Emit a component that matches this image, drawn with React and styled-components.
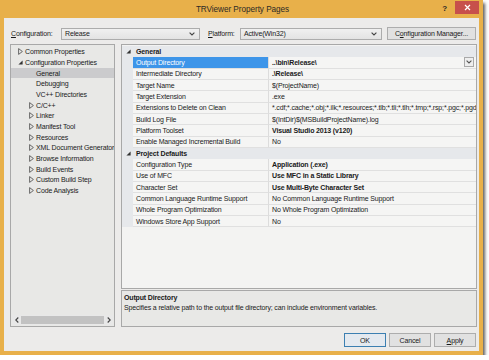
import React from 'react';
import styled, { createGlobalStyle } from 'styled-components';

const FONT = `"Liberation Sans", Arial, sans-serif`;

const Global = createGlobalStyle`
  html, body { margin: 0; padding: 0; background: #ffffff; }
  body { font-family: ${FONT}; }
  * { box-sizing: border-box; }
`;

const Window = styled.div`
  width: 483px;
  height: 355px;
  background: #e8b04a;
  padding: 0 4px 4px 4px;
  display: flex;
  flex-direction: column;
  box-shadow: 2px 3px 3px rgba(40, 40, 40, 0.75);
  font-family: ${FONT};
  font-size: 7px;
  letter-spacing: -0.15px;
  color: #1a1a1a;
`;

const TitleBar = styled.div`
  height: 18px;
  display: grid;
  grid-template-columns: 1fr auto 1fr;
  align-items: center;
`;

const TitleText = styled.div`
  font-size: 8.2px;
  letter-spacing: -0.05px;
  color: #2c2a26;
  padding-left: 2px;
`;

const TitleButtons = styled.div`
  display: flex;
  justify-content: flex-end;
  align-items: flex-start;
  align-self: stretch;
`;

const HelpGlyph = styled.div`
  font-weight: bold;
  font-size: 8px;
  color: #2c2a26;
  margin-top: 4px;
  margin-right: 8px;
`;

const CloseButton = styled.div`
  width: 24px;
  height: 13px;
  margin-top: 1px;
  background: #c7504b;
  display: flex;
  align-items: center;
  justify-content: center;
`;

const Content = styled.div`
  flex: 1;
  background: #ecebea;
  display: flex;
  flex-direction: column;
  padding: 9px 2px 4px 6px;
`;

const ConfigRow = styled.div`
  height: 13px;
  display: flex;
  align-items: center;
`;

const FieldLabel = styled.div`
  width: ${(p) => p.$w}px;
  margin-left: ${(p) => p.$ml || 0}px;
  white-space: nowrap;
`;

const Combo = styled.div`
  width: ${(p) => p.$w}px;
  height: 12px;
  border: 1px solid #acacac;
  background: linear-gradient(#f0f0f0, #e3e3e3);
  display: flex;
  align-items: center;
  justify-content: space-between;
  padding: 0 4px 0 3px;
`;

const PushButton = styled.div`
  width: ${(p) => p.$w}px;
  height: ${(p) => p.$h || 14}px;
  margin-left: ${(p) => p.$ml || 0}px;
  border: 1px solid ${(p) => (p.$default ? '#3c7fb1' : '#adadad')};
  background: ${(p) => (p.$default ? '#e4e9ef' : '#e1e1e1')};
  display: flex;
  align-items: center;
  justify-content: center;
  white-space: nowrap;
`;

const Panes = styled.div`
  margin-top: 4px;
  height: 283px;
  display: flex;
  gap: 6px;
`;

const Tree = styled.div`
  width: 105px;
  border: 1px solid #a8a8a8;
  background: #e8e8e6;
  display: flex;
  flex-direction: column;
`;

const TreeList = styled.div`
  flex: 1;
  padding-top: 1.5px;
  overflow: hidden;
`;

const TreeRow = styled.div`
  height: 10.67px;
  display: flex;
  align-items: center;
  padding-left: ${(p) => 5 + p.$level * 11}px;
  background: ${(p) => (p.$selected ? '#cbcbcd' : 'transparent')};
  white-space: nowrap;
`;

const Expander = styled.div`
  width: 9px;
  flex: none;
  display: flex;
  align-items: center;
  padding-left: 1.5px;
`;

const HScroll = styled.div`
  height: 10px;
  margin: 0 1px 1px 1px;
  display: flex;
  align-items: center;
  background: #e8e8e8;
`;

const ScrollArrow = styled.div`
  width: 9px;
  height: 10px;
  display: flex;
  align-items: center;
  justify-content: center;
`;

const ScrollThumb = styled.div`
  flex: 1;
  height: 8px;
  background: #c2c2c2;
`;

const RightColumn = styled.div`
  flex: 1;
  display: flex;
  flex-direction: column;
  gap: 1px;
`;

const Grid = styled.div`
  flex: 1;
  border: 1px solid #a8a8a8;
  background: #f3f3f2;
  padding-top: 1px;
  overflow: hidden;
`;

const CategoryRow = styled.div`
  height: 11.33px;
  display: grid;
  grid-template-columns: 11px 1fr;
  align-items: center;
  background: #e6e8eb;
  font-weight: bold;
`;

const CategoryGlyph = styled.div`
  display: flex;
  padding-left: 4px;
`;

const CategoryText = styled.div`
  padding-left: 3px;
`;

const PropRow = styled.div`
  height: 11.33px;
  display: grid;
  grid-template-columns: 11px 136px 1fr;
`;

const Gutter = styled.div`
  background: #e6e8eb;
`;

const NameCell = styled.div`
  border-bottom: 1px solid #e0e0e0;
  border-right: 1px solid #dcdcdc;
  background: ${(p) => (p.$selected ? '#3d95e9' : '#f5f5f4')};
  color: ${(p) => (p.$selected ? '#ffffff' : 'inherit')};
  padding-left: 3px;
  display: flex;
  align-items: center;
  white-space: nowrap;
  overflow: hidden;
`;

const ValueCell = styled.div`
  border-bottom: 1px solid #e0e0e0;
  background: #f5f5f4;
  padding-left: 3px;
  display: flex;
  align-items: center;
  justify-content: space-between;
  white-space: nowrap;
  overflow: hidden;
  font-weight: ${(p) => (p.$bold ? 'bold' : 'normal')};
`;

const DropButton = styled.div`
  flex: none;
  width: 10px;
  height: 10px;
  margin-right: 2px;
  border: 1px solid #a9a9a9;
  background: #eeeeee;
  display: flex;
  align-items: center;
  justify-content: center;
`;

const Description = styled.div`
  height: 37px;
  border: 1px solid #a8a8a8;
  background: #e8e8e6;
  padding: 2px 2px 0 2px;
`;

const DescTitle = styled.div`
  font-weight: bold;
  height: 10px;
  line-height: 10px;
`;

const DescText = styled.div`
  height: 10px;
  line-height: 10px;
  white-space: nowrap;
`;

const ButtonRow = styled.div`
  margin-top: 6px;
  height: 14px;
  display: flex;
  justify-content: flex-end;
  gap: 3px;
  padding-right: 1px;
`;

const Chevron = ({ color = '#444' }) => (
  <svg width="6" height="4" viewBox="0 0 6 4">
    <path d="M0.6 0.6 L3 3 L5.4 0.6" fill="none" stroke={color} strokeWidth="1.1" />
  </svg>
);

const Collapsed = () => (
  <svg width="5" height="7" viewBox="0 0 5 7">
    <path d="M0.6 0.6 L4.4 3.5 L0.6 6.4 Z" fill="none" stroke="#5a5a5a" strokeWidth="0.9" />
  </svg>
);

const Expanded = () => (
  <svg width="5" height="5" viewBox="0 0 5 5">
    <path d="M4.6 0.4 L4.6 4.6 L0.4 4.6 Z" fill="#333333" />
  </svg>
);

const ArrowLeft = () => (
  <svg width="4" height="6" viewBox="0 0 4 6">
    <path d="M3.3 0.5 L0.8 3 L3.3 5.5" fill="none" stroke="#444" strokeWidth="1.1" />
  </svg>
);

const ArrowRight = () => (
  <svg width="4" height="6" viewBox="0 0 4 6">
    <path d="M0.7 0.5 L3.2 3 L0.7 5.5" fill="none" stroke="#444" strokeWidth="1.1" />
  </svg>
);

const treeItems = [
  { label: 'Common Properties', level: 0, exp: 'c' },
  { label: 'Configuration Properties', level: 0, exp: 'e' },
  { label: 'General', level: 1, selected: true },
  { label: 'Debugging', level: 1 },
  { label: 'VC++ Directories', level: 1 },
  { label: 'C/C++', level: 1, exp: 'c' },
  { label: 'Linker', level: 1, exp: 'c' },
  { label: 'Manifest Tool', level: 1, exp: 'c' },
  { label: 'Resources', level: 1, exp: 'c' },
  { label: 'XML Document Generator', level: 1, exp: 'c' },
  { label: 'Browse Information', level: 1, exp: 'c' },
  { label: 'Build Events', level: 1, exp: 'c' },
  { label: 'Custom Build Step', level: 1, exp: 'c' },
  { label: 'Code Analysis', level: 1, exp: 'c' },
];

const gridData = [
  {
    category: 'General',
    rows: [
      { name: 'Output Directory', value: '..\\bin\\Release\\', bold: true, selected: true },
      { name: 'Intermediate Directory', value: '.\\Release\\', bold: true },
      { name: 'Target Name', value: '$(ProjectName)' },
      { name: 'Target Extension', value: '.exe' },
      {
        name: 'Extensions to Delete on Clean',
        value: '*.cdf;*.cache;*.obj;*.ilk;*.resources;*.tlb;*.tli;*.tlh;*.tmp;*.rsp;*.pgc;*.pgd;*.meta;*.tlog;*.manifest',
      },
      { name: 'Build Log File', value: '$(IntDir)$(MSBuildProjectName).log' },
      { name: 'Platform Toolset', value: 'Visual Studio 2013 (v120)', bold: true },
      { name: 'Enable Managed Incremental Build', value: 'No' },
    ],
  },
  {
    category: 'Project Defaults',
    rows: [
      { name: 'Configuration Type', value: 'Application (.exe)', bold: true },
      { name: 'Use of MFC', value: 'Use MFC in a Static Library', bold: true },
      { name: 'Character Set', value: 'Use Multi-Byte Character Set', bold: true },
      { name: 'Common Language Runtime Support', value: 'No Common Language Runtime Support' },
      { name: 'Whole Program Optimization', value: 'No Whole Program Optimization' },
      { name: 'Windows Store App Support', value: 'No' },
    ],
  },
];

export default function App() {
  return (
    <>
      <Global />
      <Window>
        <TitleBar>
          <div />
          <TitleText>TRViewer Property Pages</TitleText>
          <TitleButtons>
            <HelpGlyph>?</HelpGlyph>
            <CloseButton>
              <svg width="7" height="7" viewBox="0 0 7 7">
                <path d="M1 1 L6 6 M6 1 L1 6" stroke="#ffffff" strokeWidth="1.2" />
              </svg>
            </CloseButton>
          </TitleButtons>
        </TitleBar>
        <Content>
          <ConfigRow>
            <FieldLabel $w={50} $ml={1}>
              <u>C</u>onfiguration:
            </FieldLabel>
            <Combo $w={139}>
              <span>Release</span>
              <Chevron />
            </Combo>
            <FieldLabel $w={32} $ml={8}>
              <u>P</u>latform:
            </FieldLabel>
            <Combo $w={142}>
              <span>Active(Win32)</span>
              <Chevron />
            </Combo>
            <PushButton $w={89} $h={13} $ml={5}>
              C<u>o</u>nfiguration Manager...
            </PushButton>
          </ConfigRow>
          <Panes>
            <Tree>
              <TreeList>
                {treeItems.map((t) => (
                  <TreeRow key={t.label} $level={t.level} $selected={t.selected}>
                    <Expander>
                      {t.exp === 'c' && <Collapsed />}
                      {t.exp === 'e' && <Expanded />}
                    </Expander>
                    <span>{t.label}</span>
                  </TreeRow>
                ))}
              </TreeList>
              <HScroll>
                <ScrollArrow>
                  <ArrowLeft />
                </ScrollArrow>
                <ScrollThumb />
                <ScrollArrow>
                  <ArrowRight />
                </ScrollArrow>
              </HScroll>
            </Tree>
            <RightColumn>
              <Grid>
                {gridData.map((g) => (
                  <React.Fragment key={g.category}>
                    <CategoryRow>
                      <CategoryGlyph>
                        <Expanded />
                      </CategoryGlyph>
                      <CategoryText>{g.category}</CategoryText>
                    </CategoryRow>
                    {g.rows.map((r) => (
                      <PropRow key={r.name}>
                        <Gutter />
                        <NameCell $selected={r.selected}>{r.name}</NameCell>
                        <ValueCell $bold={r.bold}>
                          <span>{r.value}</span>
                          {r.selected && (
                            <DropButton>
                              <Chevron color="#555" />
                            </DropButton>
                          )}
                        </ValueCell>
                      </PropRow>
                    ))}
                  </React.Fragment>
                ))}
              </Grid>
              <Description>
                <DescTitle>Output Directory</DescTitle>
                <DescText>
                  Specifies a relative path to the output file directory; can include environment variables.
                </DescText>
              </Description>
            </RightColumn>
          </Panes>
          <ButtonRow>
            <PushButton $w={42} $default>
              OK
            </PushButton>
            <PushButton $w={42}>Cancel</PushButton>
            <PushButton $w={42}>
              <u>A</u>pply
            </PushButton>
          </ButtonRow>
        </Content>
      </Window>
    </>
  );
}
